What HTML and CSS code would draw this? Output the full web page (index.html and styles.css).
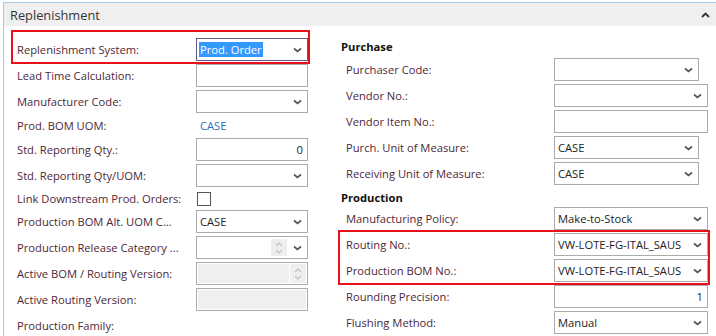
FILE: index.html
```html
<!DOCTYPE html>
<html>
<head>
	<meta charset="utf-8">
	<title>Replenishment</title>
	<link rel="stylesheet" href="styles.css">
</head>
<body>
	<div class="panel">
		<div class="panel-head">
			<span class="panel-title">Replenishment</span>
			<svg class="collapse" width="9" height="6" viewBox="0 0 9 6"><polyline points="1,5 4.5,1.5 8,5" fill="none" stroke="#333" stroke-width="1.8"/></svg>
		</div>
		<div class="panel-body">
			<div class="col col-left">
				<div class="mark mark-left">
					<div class="row">
						<span class="lbl">Replenishment System:</span>
						<div class="field focus"><span class="sel-text">Prod. Order</span><svg class="chev" width="9" height="6" viewBox="0 0 9 6"><polyline points="1,1.5 4.5,4.5 8,1.5" fill="none" stroke="#555" stroke-width="1.7"/></svg></div>
					</div>
				</div>
				<div class="row">
					<span class="lbl">Lead Time Calculation:</span>
					<div class="field"></div>
				</div>
				<div class="row">
					<span class="lbl">Manufacturer Code:</span>
					<div class="field"><svg class="chev" width="9" height="6" viewBox="0 0 9 6"><polyline points="1,1.5 4.5,4.5 8,1.5" fill="none" stroke="#555" stroke-width="1.7"/></svg></div>
				</div>
				<div class="row row-text">
					<span class="lbl">Prod. BOM UOM:</span>
					<span class="link">CASE</span>
				</div>
				<div class="row">
					<span class="lbl">Std. Reporting Qty.:</span>
					<div class="field num">0</div>
				</div>
				<div class="row">
					<span class="lbl">Std. Reporting Qty/UOM:</span>
					<div class="field"><svg class="chev" width="9" height="6" viewBox="0 0 9 6"><polyline points="1,1.5 4.5,4.5 8,1.5" fill="none" stroke="#555" stroke-width="1.7"/></svg></div>
				</div>
				<div class="row row-check">
					<span class="lbl">Link Downstream Prod. Orders:</span>
					<span class="check"></span>
				</div>
				<div class="row">
					<span class="lbl">Production BOM Alt. UOM C...</span>
					<div class="field">CASE<svg class="chev" width="9" height="6" viewBox="0 0 9 6"><polyline points="1,1.5 4.5,4.5 8,1.5" fill="none" stroke="#555" stroke-width="1.7"/></svg></div>
				</div>
				<div class="row">
					<span class="lbl">Production Release Category ...</span>
					<div class="field">
						<span class="spin spin-light"><svg width="10" height="16" viewBox="0 0 10 16"><polyline points="2,6 5,3 8,6" fill="none" stroke="#c4c4c4" stroke-width="1.4"/><polyline points="2,10 5,13 8,10" fill="none" stroke="#c4c4c4" stroke-width="1.4"/></svg></span>
						<svg class="chev chev-spin" width="9" height="6" viewBox="0 0 9 6"><polyline points="1,1.5 4.5,4.5 8,1.5" fill="none" stroke="#555" stroke-width="1.7"/></svg>
					</div>
				</div>
				<div class="row">
					<span class="lbl">Active BOM / Routing Version:</span>
					<div class="field disabled">
						<span class="spin spin-dis"><svg width="10" height="16" viewBox="0 0 10 16"><polyline points="2,6 5,3 8,6" fill="none" stroke="#c4c4c4" stroke-width="1.4"/><polyline points="2,10 5,13 8,10" fill="none" stroke="#c4c4c4" stroke-width="1.4"/></svg></span>
					</div>
				</div>
				<div class="row">
					<span class="lbl">Active Routing Version:</span>
					<div class="field disabled"></div>
				</div>
				<div class="row">
					<span class="lbl">Production Family:</span>
				</div>
			</div>

			<div class="col col-right">
				<div class="group">Purchase</div>
				<div class="row">
					<span class="lbl">Purchaser Code:</span>
					<div class="field w145"><svg class="chev" width="9" height="6" viewBox="0 0 9 6"><polyline points="1,1.5 4.5,4.5 8,1.5" fill="none" stroke="#555" stroke-width="1.7"/></svg></div>
				</div>
				<div class="row">
					<span class="lbl">Vendor No.:</span>
					<div class="field w154"><svg class="chev" width="9" height="6" viewBox="0 0 9 6"><polyline points="1,1.5 4.5,4.5 8,1.5" fill="none" stroke="#555" stroke-width="1.7"/></svg></div>
				</div>
				<div class="row">
					<span class="lbl">Vendor Item No.:</span>
					<div class="field w154"></div>
				</div>
				<div class="row">
					<span class="lbl">Purch. Unit of Measure:</span>
					<div class="field w145">CASE<svg class="chev" width="9" height="6" viewBox="0 0 9 6"><polyline points="1,1.5 4.5,4.5 8,1.5" fill="none" stroke="#555" stroke-width="1.7"/></svg></div>
				</div>
				<div class="row">
					<span class="lbl">Receiving Unit of Measure:</span>
					<div class="field w145">CASE<svg class="chev" width="9" height="6" viewBox="0 0 9 6"><polyline points="1,1.5 4.5,4.5 8,1.5" fill="none" stroke="#555" stroke-width="1.7"/></svg></div>
				</div>
				<div class="group group-2">Production</div>
				<div class="row">
					<span class="lbl">Manufacturing Policy:</span>
					<div class="field w154">Make-to-Stock<svg class="chev" width="9" height="6" viewBox="0 0 9 6"><polyline points="1,1.5 4.5,4.5 8,1.5" fill="none" stroke="#555" stroke-width="1.7"/></svg></div>
				</div>
				<div class="mark mark-right">
					<div class="row">
						<span class="lbl">Routing No.:</span>
						<div class="field w154">VW-LOTE-FG-ITAL_SAUS<svg class="chev" width="9" height="6" viewBox="0 0 9 6"><polyline points="1,1.5 4.5,4.5 8,1.5" fill="none" stroke="#555" stroke-width="1.7"/></svg></div>
					</div>
					<div class="row">
						<span class="lbl">Production BOM No.:</span>
						<div class="field w154">VW-LOTE-FG-ITAL_SAUS<svg class="chev" width="9" height="6" viewBox="0 0 9 6"><polyline points="1,1.5 4.5,4.5 8,1.5" fill="none" stroke="#555" stroke-width="1.7"/></svg></div>
					</div>
				</div>
				<div class="row">
					<span class="lbl">Rounding Precision:</span>
					<div class="field w154 num">1</div>
				</div>
				<div class="row">
					<span class="lbl">Flushing Method:</span>
					<div class="field w154">Manual<svg class="chev" width="9" height="6" viewBox="0 0 9 6"><polyline points="1,1.5 4.5,4.5 8,1.5" fill="none" stroke="#555" stroke-width="1.7"/></svg></div>
				</div>
			</div>
		</div>
	</div>
</body>
</html>
```

FILE: styles.css
```css
html, body {
	background: #fff;
	margin: 0;
	padding: 0;
}
body {
	color: #222;
	font: 11.2px "Open Sans", Arial, sans-serif;
	height: 336px;
	overflow: hidden;
}
.panel {
	border-left: 1px solid #a8c8ea;
	border-top: 1px solid #a8c8ea;
	height: 334px;
	margin: 2px 0 0 3px;
}
.panel-head {
	align-items: center;
	background: #efefef;
	display: flex;
	height: 23px;
	justify-content: space-between;
	padding: 0 6px 0 6px;
}
.panel-title {
	color: #333;
	font-size: 12.8px;
}
.panel-body {
	display: grid;
	grid-template-columns: 291px 367px;
	column-gap: 33px;
	padding: 4px 0 0 13px;
}
.row {
	align-items: center;
	display: flex;
	height: 23px;
	margin-bottom: 3px;
}
.lbl {
	color: #4e2738;
	flex: none;
	white-space: nowrap;
}
.col-left .lbl {
	width: 179px;
}
.col-right .row {
	padding-left: 5px;
}
.col-right .lbl {
	width: 208px;
}
.field {
	align-items: center;
	background: #fff;
	border: 1px solid #ababab;
	box-sizing: border-box;
	color: #222;
	display: flex;
	height: 23px;
	padding: 0 0 0 3px;
	white-space: nowrap;
	width: 112px;
}
.field.w145 { width: 145px; }
.field.w154 { width: 154px; }
.field.num {
	justify-content: flex-end;
	padding-right: 4px;
}
.field.focus {
	border-color: #5e5b8a;
	padding-left: 2px;
}
.sel-text {
	background: #3399ff;
	color: #fff;
	line-height: 15px;
	padding: 0 1px;
}
.chev {
	flex: none;
	margin-left: auto;
	margin-right: 5px;
}
.chev-spin {
	margin-left: 0;
	margin-right: 5px;
}
.spin {
	align-items: center;
	display: flex;
	flex: none;
	height: 17px;
	justify-content: center;
	width: 16px;
}
.spin-light {
	background: #eeeeee;
	margin-left: auto;
	margin-right: 6px;
}
.field.disabled {
	background: #efefef;
	box-shadow: inset 0 0 0 1px #fff;
	padding: 0;
}
.spin-dis {
	border-left: 1px solid #fff;
	height: 21px;
	margin-left: auto;
	margin-right: 1px;
}
.row-text {
	height: 19px;
}
.link {
	color: #2f6fbd;
	padding-left: 4px;
}
.row-check {
	height: 17px;
}
.check {
	border: 1px solid #555;
	box-sizing: border-box;
	height: 14px;
	margin-left: 1px;
	width: 14px;
}
.mark {
	border: 2px solid #e8111a;
}
.mark .row {
	margin-bottom: 0;
}
.mark-left {
	margin: 0 -2px 0 -6px;
	padding: 6px 0 1px 4px;
}
.mark-right {
	margin: -3px -2px 0 -3px;
	padding: 1px 0 1px 1px;
}
.mark-right .row + .row {
	margin-top: 3px;
}
.group {
	color: #111;
	font-weight: bold;
	line-height: 16px;
	padding: 9px 0 0 0;
	margin-bottom: 3px;
}
.group-2 {
	margin-bottom: 0;
	padding: 2px 0 1px 0;
}
```
